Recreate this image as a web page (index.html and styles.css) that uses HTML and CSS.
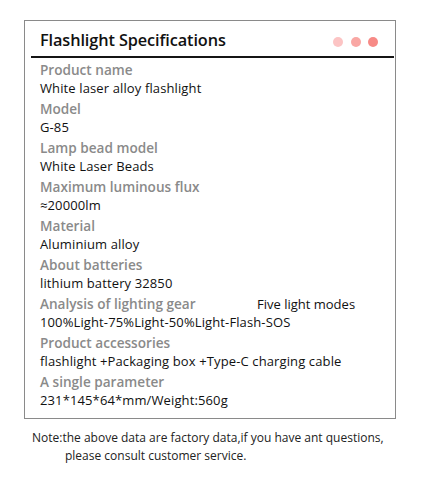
FILE: index.html
```html
<!DOCTYPE html>
<html>
<head>
<meta charset="utf-8">
<link rel="stylesheet" href="styles.css">
</head>
<body>
<div class="card">
  <div class="header">
    <h1 class="title">Flashlight Specifications</h1>
    <div class="dots"><span class="dot d1"></span><span class="dot d2"></span><span class="dot d3"></span></div>
  </div>
  <div class="specs">
    <div class="label">Product name</div>
    <div class="value">White laser alloy flashlight</div>
    <div class="label">Model</div>
    <div class="value">G-85</div>
    <div class="label">Lamp bead model</div>
    <div class="value">White Laser Beads</div>
    <div class="label">Maximum luminous flux</div>
    <div class="value">≈20000lm</div>
    <div class="label">Material</div>
    <div class="value">Aluminium alloy</div>
    <div class="label">About batteries</div>
    <div class="value">lithium battery 32850</div>
    <div class="label row"><span class="label-text">Analysis of lighting gear</span><span class="aside">Five light modes</span></div>
    <div class="value">100%Light-75%Light-50%Light-Flash-SOS</div>
    <div class="label">Product accessories</div>
    <div class="value">flashlight +Packaging box +Type-C charging cable</div>
    <div class="label">A single parameter</div>
    <div class="value">231*145*64*mm/Weight:560g</div>
  </div>
</div>
<p class="note">Note:the above data are factory data,if you have ant questions,<br><span class="indent">please consult customer service.</span></p>
</body>
</html>
```

FILE: styles.css
```css
html, body {
  margin: 0;
  padding: 0;
  background: #fff;
}
body {
  font-family: "Open Sans", "Noto Sans", sans-serif;
  color: #111;
  width: 421px;
  height: 480px;
  overflow: hidden;
}
.card {
  margin: 20px 0 0 24px;
  width: 370px;
  height: 397px;
  border: 1px solid #8a8a8a;
}
.header {
  margin: 0 1px 0 6px;
  height: 35px;
  border-bottom: 2px solid #151515;
  display: flex;
  align-items: center;
  justify-content: space-between;
  padding: 0 16px 0 9px;
}
.title {
  margin: 0;
  font-size: 16.3px;
  font-weight: 600;
  line-height: 22px;
  padding-top: 3px;
  color: #111;
  letter-spacing: -0.1px;
}
.dots {
  display: flex;
  gap: 7.5px;
  padding-top: 7px;
}
.dot {
  width: 10px;
  height: 10px;
  border-radius: 50%;
  display: block;
}
.d1 { background: #fcc4c4; }
.d2 { background: #f9a7a4; }
.d3 { background: #f78a86; }
.specs {
  padding: 2px 0 0 15px;
}
.label {
  font-size: 13.6px;
  font-weight: 600;
  color: #8a8a8a;
  line-height: 19px;
}
.value {
  font-size: 13px;
  letter-spacing: 0.12px;
  color: #111;
  line-height: 19px;
  margin-bottom: 1px;
}
.row {
  display: flex;
  align-items: flex-start;
}
.label-text {
  width: 217px;
}
.aside {
  font-size: 13px;
  font-weight: 400;
  color: #111;
  line-height: 17px;
  margin-top: 2px;
}
.note {
  margin: 9.5px 0 0 32px;
  font-size: 12px;
  line-height: 18.5px;
  color: #222;
}
.indent {
  padding-left: 33px;
}
```
